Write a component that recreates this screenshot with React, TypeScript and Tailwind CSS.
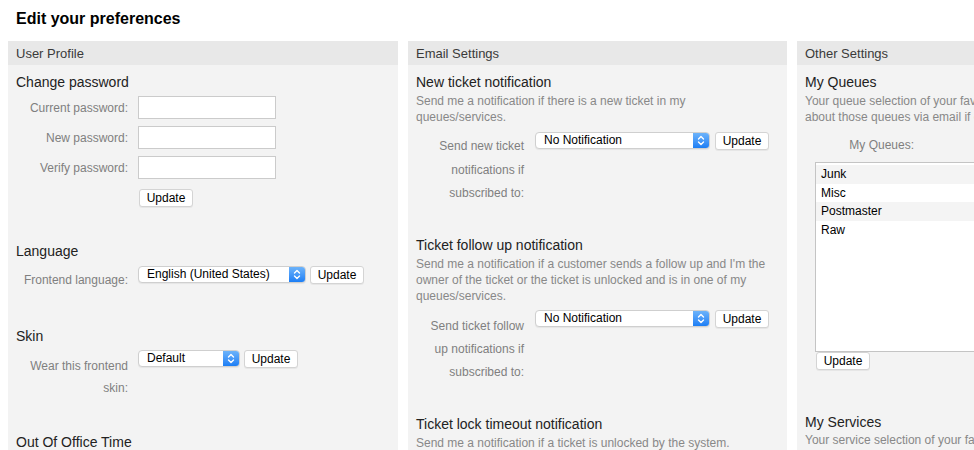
import type { ReactNode } from 'react'

function UpdateButton({ className = '' }: { className?: string }) {
  return (
    <button
      className={`h-[18px] w-[54px] rounded-[3px] border border-[#d4d4d4] bg-white text-[12px] leading-[16px] text-black shadow-[0_1px_0_rgba(0,0,0,0.05)] ${className}`}
    >
      Update
    </button>
  )
}

function Select({ value, width }: { value: string; width: number }) {
  return (
    <div
      className="flex h-[17px] items-stretch rounded-[4px] border border-[#cfcfcf] bg-white shadow-[0_1px_1px_rgba(0,0,0,0.06)]"
      style={{ width }}
    >
      <span className="flex-1 pl-[8px] text-[12px] leading-[15px] text-black">{value}</span>
      <span className="flex w-[16px] items-center justify-center rounded-r-[3px] bg-gradient-to-b from-[#6cb3fa] to-[#1a7ef5]">
        <svg width="8" height="11" viewBox="0 0 8 11" fill="none" stroke="white" strokeWidth="1.4" strokeLinecap="round" strokeLinejoin="round">
          <path d="M1.5 4 L4 1.5 L6.5 4" />
          <path d="M1.5 7 L4 9.5 L6.5 7" />
        </svg>
      </span>
    </div>
  )
}

function Heading({ children, className = '' }: { children: ReactNode; className?: string }) {
  return <h3 className={`text-[14px] leading-[18px] text-[#222] ${className}`}>{children}</h3>
}

function Desc({ children, className = '' }: { children: ReactNode; className?: string }) {
  return <p className={`text-[12px] leading-[16px] text-[#888] ${className}`}>{children}</p>
}

function Panel({ title, width, children }: { title: string; width?: number; children: ReactNode }) {
  return (
    <div className={`flex flex-col ${width ? 'shrink-0' : 'flex-1'}`} style={width ? { width } : undefined}>
      <div className="h-[24px] bg-[#e8e8e8] px-[8px] pt-[1px] text-[13px] leading-[24px] text-[#3a3a3a]">{title}</div>
      <div className="flex-1 bg-[#f3f3f3] px-[8px] pt-[8px]">{children}</div>
    </div>
  )
}

const passwordFields = ['Current password:', 'New password:', 'Verify password:']
const queues = ['Junk', 'Misc', 'Postmaster', 'Raw']

export default function App() {
  return (
    <div className="h-[450px] w-[974px] overflow-hidden bg-white font-['Liberation_Sans',Arial,sans-serif]">
      <h1 className="pl-[16px] pt-[9px] text-[16px] font-bold leading-[20px] text-black">Edit your preferences</h1>
      <div className="mt-[12px] flex h-[460px] gap-[10px] pl-[8px]">
        <Panel title="User Profile" width={390}>
          <Heading>Change password</Heading>
          <div className="mt-[5px] flex flex-col gap-[7px]">
            {passwordFields.map((label) => (
              <div key={label} className="flex items-center gap-[10px]">
                <span className="w-[112px] text-right text-[12px] text-[#7f7f7f]">{label}</span>
                <div className="h-[23px] w-[138px] border border-[#cbcbcb] bg-white" />
              </div>
            ))}
          </div>
          <UpdateButton className="ml-[123px] mt-[10px]" />

          <Heading className="mt-[33px]">Language</Heading>
          <div className="mt-[6px] flex items-start gap-[10px]">
            <span className="w-[112px] pt-[3px] text-right text-[12px] leading-[22px] text-[#7f7f7f]">Frontend language:</span>
            <Select value="English (United States)" width={168} />
            <UpdateButton className="-ml-[6px]" />
          </div>

          <Heading className="mt-[36px]">Skin</Heading>
          <div className="mt-[5px] flex items-start gap-[10px]">
            <span className="w-[112px] pt-[5px] text-right text-[12px] leading-[22px] text-[#7f7f7f]">
              Wear this frontend skin:
            </span>
            <Select value="Default" width={102} />
            <UpdateButton className="-ml-[6px]" />
          </div>

          <Heading className="mt-[34px]">Out Of Office Time</Heading>
        </Panel>

        <Panel title="Email Settings" width={379}>
          <Heading>New ticket notification</Heading>
          <Desc className="mt-[2px]">
            Send me a notification if there is a new ticket in my
            <br />
            queues/services.
          </Desc>
          <div className="mt-[7px] flex items-start">
            <span className="w-[108px] pt-[3px] text-right text-[12px] leading-[23.5px] text-[#7f7f7f]">
              Send new ticket notifications if subscribed to:
            </span>
            <div className="ml-[11px]">
              <Select value="No Notification" width={175} />
            </div>
            <UpdateButton className="ml-[5px]" />
          </div>

          <Heading className="mt-[30px]">Ticket follow up notification</Heading>
          <Desc className="mt-[2px]">
            Send me a notification if a customer sends a follow up and I'm the
            <br />
            owner of the ticket or the ticket is unlocked and is in one of my
            <br />
            queues/services.
          </Desc>
          <div className="mt-[6px] flex items-start">
            <span className="w-[108px] pt-[5px] text-right text-[12px] leading-[23px] text-[#7f7f7f]">
              Send ticket follow up notifications if subscribed to:
            </span>
            <div className="ml-[11px]">
              <Select value="No Notification" width={175} />
            </div>
            <UpdateButton className="ml-[5px]" />
          </div>

          <Heading className="mt-[31px]">Ticket lock timeout notification</Heading>
          <Desc className="mt-[2px]">Send me a notification if a ticket is unlocked by the system.</Desc>
        </Panel>

        <Panel title="Other Settings">
          <Heading>My Queues</Heading>
          <Desc className="mt-[2px] whitespace-nowrap">
            Your queue selection of your favourite queues. You also get notified
            <br />
            about those queues via email if enabled.
          </Desc>
          <div className="mt-[9px] w-[109px] text-right text-[12px] leading-[22px] text-[#7f7f7f]">My Queues:</div>
          <div className="ml-[10px] mt-[6px] h-[190px] w-[200px] border border-[#c4c4c4] bg-white pt-[2px]">
            {queues.map((q, i) => (
              <div
                key={q}
                className={`h-[18.5px] pl-[5px] text-[12px] leading-[18px] text-black ${i % 2 === 0 ? 'bg-[#f4f4f4]' : 'bg-white'}`}
              >
                {q}
              </div>
            ))}
          </div>
          <UpdateButton className="ml-[11px] block" />

          <Heading className="mt-[43px]">My Services</Heading>
          <Desc className="mt-[1px] whitespace-nowrap">Your service selection of your favourite services.</Desc>
        </Panel>
      </div>
    </div>
  )
}
